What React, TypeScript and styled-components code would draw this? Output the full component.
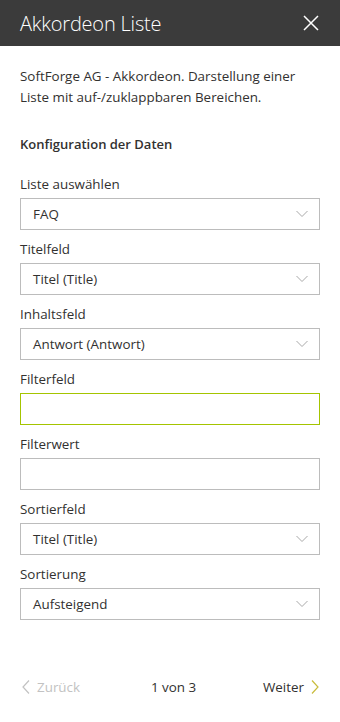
import React from "react";
import styled, { createGlobalStyle } from "styled-components";

const Global = createGlobalStyle`
  html, body { margin: 0; padding: 0; background: #fff; }
  body { font-family: "Open Sans", "Noto Sans", sans-serif; color: #323130; }
  * { box-sizing: border-box; }
`;

const Panel = styled.div`
  width: 340px;
  height: 722px;
  display: flex;
  flex-direction: column;
`;

const Header = styled.div`
  height: 46px;
  background: #3b3b3b;
  display: flex;
  align-items: center;
  justify-content: space-between;
  padding: 0 20px 0 20px;
`;

const Title = styled.div`
  color: #fff;
  font-size: 20px;
  font-weight: 300;
  letter-spacing: -0.2px;
`;

const CloseButton = styled.div`
  width: 18px;
  height: 18px;
  display: flex;
  align-items: center;
  justify-content: center;
`;

const Body = styled.div`
  padding: 20px 20px 0 20px;
  display: flex;
  flex-direction: column;
`;

const Description = styled.p`
  margin: 0;
  font-size: 13.4px;
  line-height: 21px;
  color: #323130;
`;

const Heading = styled.div`
  margin-top: 26px;
  margin-bottom: 20px;
  font-size: 13px;
  font-weight: 600;
  line-height: 20px;
  color: #323130;
`;

const Field = styled.div`
  display: flex;
  flex-direction: column;
  margin-bottom: 9px;
`;

const Label = styled.div`
  font-size: 13.4px;
  line-height: 20px;
  margin-bottom: 4px;
  color: #323130;
`;

const Box = styled.div<{ $focus?: boolean }>`
  height: 32px;
  border: 1px solid ${(p) => (p.$focus ? "#a4c400" : "#bcbcbc")};
  display: flex;
  align-items: center;
  justify-content: space-between;
  padding: 0 11px 0 12px;
  font-size: 13.4px;
  color: #323130;
`;

const Footer = styled.div`
  margin-top: 38px;
  height: 40px;
  padding: 0 21px 0 22px;
  display: flex;
  align-items: center;
  justify-content: space-between;
  font-size: 13.4px;
`;

const NavButton = styled.div<{ $disabled?: boolean }>`
  display: flex;
  align-items: center;
  gap: 7px;
  color: ${(p) => (p.$disabled ? "#c2c2c2" : "#323130")};
`;

const PageInfo = styled.div`
  color: #323130;
  margin-left: 4px;
`;

const Chevron = () => (
  <svg width="12" height="8" viewBox="0 0 12 8">
    <path d="M0.5 1 L6 6.5 L11.5 1" fill="none" stroke="#a8a8a8" strokeWidth="1" />
  </svg>
);

const Field_ = ({ label, value, select, focus }: { label: string; value?: string; select?: boolean; focus?: boolean }) => (
  <Field>
    <Label>{label}</Label>
    <Box $focus={focus}>
      <span>{value}</span>
      {select && <Chevron />}
    </Box>
  </Field>
);

export default function App() {
  return (
    <>
      <Global />
      <Panel>
        <Header>
          <Title>Akkordeon Liste</Title>
          <CloseButton>
            <svg width="16" height="16" viewBox="0 0 16 16">
              <path d="M1 1 L15 15 M15 1 L1 15" stroke="#fff" strokeWidth="1.5" />
            </svg>
          </CloseButton>
        </Header>
        <Body>
          <Description>
            SoftForge AG - Akkordeon. Darstellung einer Liste mit auf-/zuklappbaren Bereichen.
          </Description>
          <Heading>Konfiguration der Daten</Heading>
          <Field_ label="Liste auswählen" value="FAQ" select />
          <Field_ label="Titelfeld" value="Titel (Title)" select />
          <Field_ label="Inhaltsfeld" value="Antwort (Antwort)" select />
          <Field_ label="Filterfeld" focus />
          <Field_ label="Filterwert" />
          <Field_ label="Sortierfeld" value="Titel (Title)" select />
          <Field_ label="Sortierung" value="Aufsteigend" select />
        </Body>
        <Footer>
          <NavButton $disabled>
            <svg width="8" height="14" viewBox="0 0 8 14">
              <path d="M7 0.5 L1 7 L7 13.5" fill="none" stroke="#c2c2c2" strokeWidth="1.2" />
            </svg>
            Zurück
          </NavButton>
          <PageInfo>1 von 3</PageInfo>
          <NavButton>
            Weiter
            <svg width="8" height="14" viewBox="0 0 8 14">
              <path d="M1 0.5 L7 7 L1 13.5" fill="none" stroke="#c9bc3c" strokeWidth="1.2" />
            </svg>
          </NavButton>
        </Footer>
      </Panel>
    </>
  );
}
